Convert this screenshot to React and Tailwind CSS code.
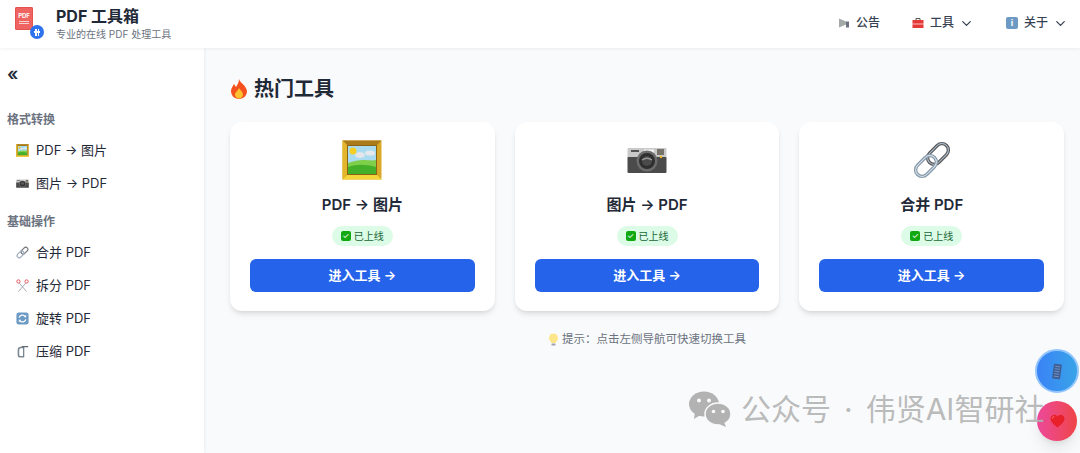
import { ChevronDown } from "lucide-react";

const FONT = "font-['Inter','Noto_Sans_CJK_SC',sans-serif]";

// emoji-like pictures, no colour emoji font in the sandbox
function Picture({ size }) {
    return (
        <svg width={size} height={size} viewBox="0 0 40 40">
            <rect x="0.5" y="0.5" width="39" height="39" fill="#d9a92a" />
            <path d="M0.500 0.500h39L34 6H6z" fill="#a97b1b" />
            <path d="M0.500 39.500h39L34 34H6z" fill="#f6d53c" />
            <path d="M0.500 0.500L6 6v28l-5.500 5.500z" fill="#e3b52d" />
            <rect x="5" y="5" width="30" height="30" fill="#8a6414" />
            <rect x="6" y="6" width="28" height="28" fill="#a9dcf0" />
            <circle cx="11" cy="11" r="3.500" fill="#f6cf24" />
            <ellipse cx="18" cy="15" rx="5" ry="3" fill="#e2e5ea" />
            <ellipse cx="28" cy="13" rx="5" ry="2.600" fill="#e4e8ec" />
            <path d="M6 23c6-2 11-3 15-3 5 0 9 1 13 0v14H6z" fill="#7fcf4a" />
            <path d="M6 27c8-3 18-3 28 0v7H6z" fill="#44b02a" />
        </svg>
    );
}

function Camera({ size }) {
    return (
        <svg width={size} height={size} viewBox="0 0 40 40">
            <rect x="0.5" y="8" width="39" height="11" rx="1" fill="#c9c9c9" />
            <rect x="0.5" y="17" width="39" height="16" rx="1" fill="#4b4b4b" />
            <rect x="17" y="9.5" width="10" height="3" fill="#f1f1ef" />
            <rect x="4" y="10" width="8" height="2" fill="#555" />
            <rect x="30" y="9" width="7" height="6" fill="#77736a" />
            <circle cx="34" cy="17" r="1.2" fill="#f2b619" />
            <circle cx="20" cy="21" r="10.5" fill="#6d6d6d" />
            <circle cx="20" cy="21" r="8" fill="#2f2f2f" />
            <circle cx="20" cy="21" r="5" fill="#4a4a4a" />
            <path d="M15 20c3-2 7-2 10 0" stroke="#9a9a9a" strokeWidth="1.4" fill="none" />
        </svg>
    );
}

function LinkEmoji({ size }) {
    return (
        <svg width={size} height={size} viewBox="0 0 40 40" fill="none">
            <g transform="rotate(-45 26 14)">
                <rect x="14" y="7.5" width="24" height="13" rx="6.5" stroke="#5f5a58" strokeWidth="3.4" />
                <rect x="14" y="7.5" width="24" height="13" rx="6.5" stroke="#a9c4dc" strokeWidth="1" />
            </g>
            <g transform="rotate(-45 14 26)">
                <rect x="2" y="19.5" width="24" height="13" rx="6.5" stroke="#8a99a8" strokeWidth="3.4" />
                <rect x="2" y="19.5" width="24" height="13" rx="6.5" stroke="#d6e6f4" strokeWidth="1" />
            </g>
        </svg>
    );
}

function Scissors({ size }) {
    return (
        <svg width={size} height={size} viewBox="0 0 16 16" fill="none">
            <path d="M4 5l9 10.500M12 5L3 15.500" stroke="#9aa3ab" strokeWidth="1.100" />
            <circle cx="3" cy="3" r="2" stroke="#e2525c" strokeWidth="1.200" />
            <circle cx="13" cy="3" r="2" stroke="#e2525c" strokeWidth="1.200" />
        </svg>
    );
}

function Rotate({ size }) {
    return (
        <svg width={size} height={size} viewBox="0 0 16 16" fill="none">
            <rect x="0.500" y="0.500" width="15" height="15" rx="3" fill="#6c9ac4" />
            <path d="M3.800 7a4.300 4.300 0 0 1 7.500-1.500M12.200 9a4.300 4.300 0 0 1-7.500 1.500" stroke="#fff" strokeWidth="1.500" />
            <path d="M12.500 3.500v3h-3zM3.500 12.500v-3h3z" fill="#fff" />
        </svg>
    );
}

function Clamp({ size }) {
    return (
        <svg width={size} height={size} viewBox="0 0 16 16" fill="none">
            <path d="M9 3H6a3 3 0 0 0-3 3v6a2.500 2.500 0 0 0 2.500 2.500H10" stroke="#7c8a96" strokeWidth="2" />
            <path d="M9.500 1.500V14M7 2h8" stroke="#5d6b77" strokeWidth="1.300" />
        </svg>
    );
}

const SIDEBAR = [
    {
        title: "格式转换",
        items: [
            { icon: Picture, label: "PDF → 图片" },
            { icon: Camera, label: "图片 → PDF" },
        ],
    },
    {
        title: "基础操作",
        items: [
            { icon: LinkEmoji, label: "合并 PDF" },
            { icon: Scissors, label: "拆分 PDF" },
            { icon: Rotate, label: "旋转 PDF" },
            { icon: Clamp, label: "压缩 PDF" },
        ],
    },
];

const TOOLS = [
    { icon: Picture, title: "PDF → 图片" },
    { icon: Camera, title: "图片 → PDF" },
    { icon: LinkEmoji, title: "合并 PDF" },
];

function Logo() {
    return (
        <div className="relative w-[30px] h-[32px]">
            <div className="absolute left-0 top-0 w-[18px] h-[23px] rounded-[1px] bg-[#ef6461] border border-[#e5534f] flex flex-col items-center pt-[4px]">
                <span className="text-[6px] leading-[7px] font-bold text-white">PDF</span>
                <span className="w-[10px] h-px mt-[2px] bg-white/70" />
                <span className="w-[10px] h-px mt-[1px] bg-white/70" />
            </div>
            <div className="absolute left-[15px] top-[18px] w-[14px] h-[14px] rounded-full bg-[#2f72ee] flex items-center justify-center gap-px">
                <span className="w-[1.5px] h-[7px] bg-white" />
                <span className="w-[1.5px] h-[7px] bg-white" />
                <span className="absolute left-[4px] top-[6px] w-[6px] h-[1.5px] bg-white" />
            </div>
        </div>
    );
}

function NavItem({ icon, label, chevron }) {
    return (
        <div className="flex items-center text-[12px] font-medium text-[#374151]">
            {icon}
            <span className="ml-[6px]">{label}</span>
            {chevron && <ChevronDown size={15} className="ml-[5px]" />}
        </div>
    );
}

function ToolCard({ icon: Icon, title }) {
    return (
        <div className="flex-1 h-[189px] bg-white rounded-xl shadow-[0_4px_6px_-1px_rgba(0,0,0,0.1),0_2px_4px_-2px_rgba(0,0,0,0.1)] px-5 pt-[18px] flex flex-col items-center">
            <Icon size={40} />
            <h3 className="mt-[14px] text-[15px] leading-[22px] font-semibold text-[#1f2937]">{title}</h3>
            <span className="mt-[10px] h-5 px-[9px] flex items-center gap-[3px] rounded-full bg-[#dcfce7] text-[10px] text-[#166534]">
                <span className="w-[10px] h-[10px] rounded-[2px] bg-[#12a812] text-white text-[8px] leading-[10px] text-center">✓</span>
                已上线
            </span>
            <button className="mt-[13px] w-full h-[33px] rounded-md bg-[#2563eb] text-white text-[13px] font-semibold">
                进入工具 →
            </button>
        </div>
    );
}

export default function App() {
    return (
        <div className={`${FONT} relative w-[1080px] h-[453px] overflow-hidden bg-[#f9fafb] flex flex-col`}>
            {/* Header */}
            <header className="h-[48px] shrink-0 bg-white shadow-[0_1px_3px_rgba(0,0,0,0.06)] z-10 flex items-center pl-[15px] pr-[12px] pb-[2px]">
                <Logo />
                <div className="ml-[11px]">
                    <div className="text-[16px] leading-[20px] font-bold text-[#1f2937]">PDF 工具箱</div>
                    <div className="mt-[1px] text-[10px] leading-[14px] text-[#6b7280]">专业的在线 PDF 处理工具</div>
                </div>
                <div className="ml-auto flex items-center gap-[32px]">
                    <NavItem
                        label="公告"
                        icon={
                            <svg width="12" height="12" viewBox="0 0 12 12">
                                <path d="M1 1.500l7 3v3l-7 3z" fill="#a3a8a8" />
                                <rect x="8" y="4.500" width="3" height="6" fill="#6b7280" />
                            </svg>
                        }
                    />
                    <NavItem
                        label="工具"
                        chevron
                        icon={
                            <svg width="12" height="12" viewBox="0 0 12 12">
                                <path d="M4 3V1.500h4V3" stroke="#555" fill="none" />
                                <rect x="0.500" y="3" width="11" height="8" fill="#e53935" />
                                <rect x="0.500" y="6.500" width="11" height="1" fill="#fff" opacity="0.7" />
                            </svg>
                        }
                    />
                    <NavItem
                        label="关于"
                        chevron
                        icon={
                            <span className="w-[12px] h-[12px] rounded-[2px] bg-[#6c9ac4] text-white text-[9px] leading-[12px] font-bold text-center">i</span>
                        }
                    />
                </div>
            </header>

            <div className="flex flex-1 min-h-0">
                {/* Sidebar */}
                <aside className="w-[204px] shrink-0 bg-white shadow-[1px_0_3px_rgba(0,0,0,0.05)] px-[7px] pt-[17px]">
                    <div className="text-[18px] leading-[18px] font-semibold text-[#1f2937]">«</div>
                    {SIDEBAR.map((group, i) => (
                        <div key={group.title} className={i === 0 ? "mt-[29px]" : "mt-[14px]"}>
                            <div className="text-[12px] leading-[16px] font-semibold text-[#6b7280]">{group.title}</div>
                            <div className="mt-[6px] flex flex-col">
                                {group.items.map(({ icon: Icon, label }) => (
                                    <div key={label} className="h-[33px] pl-[9px] flex items-center gap-[7px] text-[13px] text-[#1f2937]">
                                        <Icon size={13} />
                                        <span>{label}</span>
                                    </div>
                                ))}
                            </div>
                        </div>
                    ))}
                </aside>

                {/* Main */}
                <main className="flex-1 min-w-0 pl-[26px] pr-[16px] pt-[29px]">
                    <h2 className="flex items-center gap-[6px] text-[20px] leading-[24px] font-bold text-[#1f2937]">
                        <svg width="18" height="20" viewBox="0 0 18 20">
                            <path d="M9 0c1 4 7 6 8 12 0 5-4 8-8 8s-8-3-8-8c0-3 2-5 3-7 1 1 1 2 2 3 1-2 3-4 3-8z" fill="#f4511e" />
                            <path d="M9 9c1 2 4 4 4 6.500 0 2.500-2 4-4 4s-4-1.500-4-4C5 13 8 12 9 9z" fill="#fdc02f" />
                        </svg>
                        热门工具
                    </h2>
                    <div className="mt-[21px] flex gap-5">
                        {TOOLS.map((tool) => (
                            <ToolCard key={tool.title} {...tool} />
                        ))}
                    </div>
                    <p className="mt-[20px] flex items-center justify-center gap-[3px] text-[11.5px] leading-[16px] text-[#6b7280]">
                        <svg width="11" height="13" viewBox="0 0 11 13">
                            <path d="M5.500 0.500a4.500 4.500 0 0 0-2.500 8.200V10h5V8.700A4.500 4.500 0 0 0 5.500 0.500z" fill="#fde68a" />
                            <rect x="3.500" y="10.500" width="4" height="2" rx="0.500" fill="#9ca3af" />
                        </svg>
                        提示：点击左侧导航可快速切换工具
                    </p>
                </main>
            </div>

            {/* Floating buttons */}
            <button className="absolute left-[1035px] top-[349px] w-[44px] h-[44px] rounded-full bg-gradient-to-r from-[#3b82f6] to-[#38a3e8] border-2 border-[#93c5fd] flex items-center justify-center">
                <svg width="12" height="17" viewBox="0 0 12 17">
                    <g transform="rotate(8 6 8.500)">
                        <rect x="2" y="1" width="8" height="15" rx="1" fill="#3f5f94" />
                        <path d="M3.500 3.500h5M3.500 6h5M3.500 8.500h5M3.500 11h5M3.500 13.500h5" stroke="#7b9ccb" strokeWidth="0.800" />
                    </g>
                </svg>
            </button>
            <button className="absolute left-[1037px] top-[401px] w-[40px] h-[40px] rounded-full bg-gradient-to-r from-[#ec4899] to-[#ef4444] shadow-lg flex items-center justify-center">
                <svg width="15" height="14" viewBox="0 0 15 14">
                    <path d="M7.500 13.500C3 10 0.500 7.500 0.500 4.500A3.800 3.800 0 0 1 7.500 2.500a3.800 3.800 0 0 1 7 2c0 3-2.500 5.500-7 9z" fill="#e8202a" />
                    <path d="M2.500 4.500c0-1 .7-1.800 1.700-2" stroke="#ff8a8a" strokeWidth="0.900" fill="none" />
                </svg>
            </button>

            {/* Watermark, sits on top of the heart button */}
            <div className="absolute left-[689px] top-[391px] flex items-center text-[#b2b2b2]/90 text-[30px] leading-[36px] whitespace-nowrap pointer-events-none">
                <svg width="43" height="36" viewBox="0 0 43 36" fill="#b2b2b2">
                    <ellipse cx="15" cy="13" rx="15" ry="12.500" />
                    <path d="M6 21l-1 7 8-5z" />
                    <ellipse cx="29" cy="23" rx="13" ry="11" stroke="#f9fafb" strokeWidth="1.500" />
                    <path d="M35 31l2 5-7-3z" />
                    <circle cx="10" cy="9.500" r="2" fill="#f9fafb" />
                    <circle cx="20" cy="9.500" r="2" fill="#f9fafb" />
                    <circle cx="24.500" cy="20.500" r="1.800" fill="#f9fafb" />
                    <circle cx="34" cy="20.500" r="1.800" fill="#f9fafb" />
                </svg>
                <span className="ml-[9px]">公众号</span>
                <span className="mx-[13px]">·</span>
                <span>伟贤AI智研社</span>
            </div>
        </div>
    );
}
